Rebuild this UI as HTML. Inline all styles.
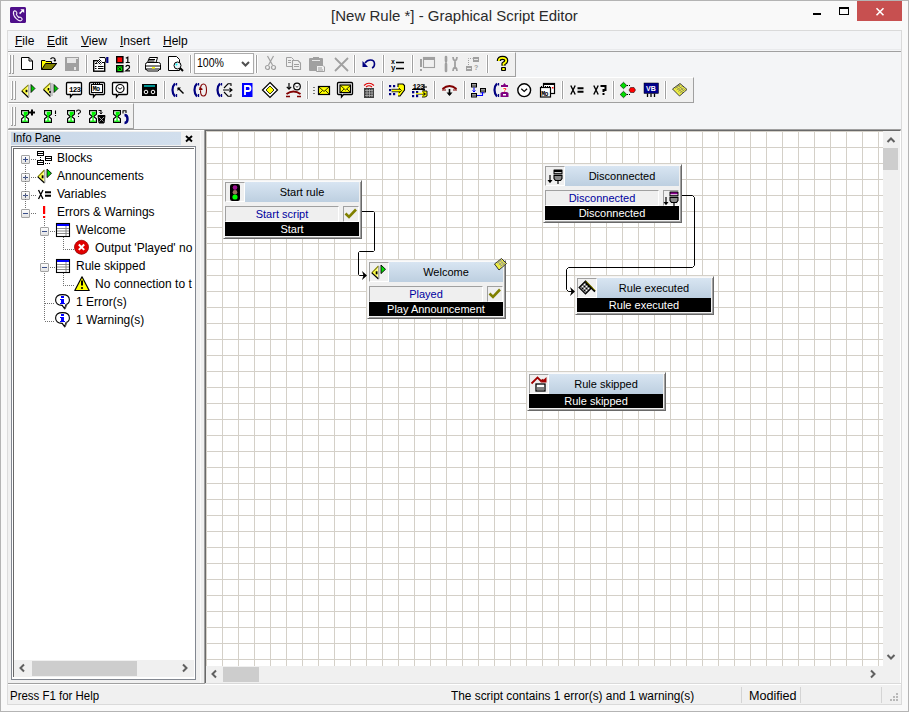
<!DOCTYPE html>
<html><head><meta charset="utf-8">
<style>
*{margin:0;padding:0;box-sizing:border-box}
html,body{width:909px;height:712px;overflow:hidden;background:#f9f9f9;font-family:"Liberation Sans",sans-serif;font-size:12px;color:#000}
.a{position:absolute}
#win{position:absolute;left:0;top:0;width:909px;height:712px;border:1px solid #b4b4b4;background:#f9f9f9}
svg{position:absolute;overflow:visible}
.sep{position:absolute;width:1px;background:#a0a0a0;border-right:1px solid #fff;width:2px}
.grip{position:absolute;width:4px;border-left:1px solid #a8a8a8;border-right:1px solid #a8a8a8}
.t{position:absolute;white-space:nowrap}
.node{position:absolute;background:#f0f0f0;border-left:1px solid #f8f8f8;border-top:1px solid #f8f8f8;box-shadow:inset -1px -1px 0 #a0a0a0, 1px 1px 0 #696969}
.hdr{position:absolute;background:linear-gradient(#d8e4f0,#bfd0e2);text-align:center;font-size:12px;line-height:19px}
.ibox{position:absolute;background:#f0f0f0;border-left:1px solid #a0a0a0;border-top:1px solid #a0a0a0;border-right:1px solid #fff;border-bottom:1px solid #fff}
.row{position:absolute;background:#efefef;border-left:1px solid #a0a0a0;border-top:1px solid #a0a0a0;border-right:1px solid #fff;border-bottom:1px solid #fff;text-align:center;color:#00008b;line-height:14px}
.blk{position:absolute;background:#000;color:#fff;text-align:center;line-height:14px}
.tree{position:absolute;white-space:nowrap;line-height:18px}
</style></head><body>
<div id="win"></div>
<!-- title bar -->
<div class="t" style="left:0;top:6px;width:909px;text-align:center;font-size:15px;color:#2b2b2b;line-height:20px">[New Rule *] - Graphical Script Editor</div>
<!-- app icon -->
<div class="a" style="left:10px;top:7px;width:16px;height:16px;background:#5b0f8f;border-radius:2px"></div>
<!-- min max close -->
<div class="a" style="left:813px;top:13px;width:8px;height:2px;background:#000"></div>
<div class="a" style="left:839px;top:7px;width:10px;height:8px;border:1px solid #000;border-top-width:2px"></div>
<div class="a" style="left:857px;top:1px;width:45px;height:20px;background:#c75050"></div>

<!-- menu bar -->
<div class="a" style="left:7px;top:30px;width:895px;height:21px;background:#f4f5f7;border-top:1px solid #dadada;border-left:1px solid #dadada;border-right:1px solid #dadada"></div>
<div class="a" style="left:7px;top:49px;width:895px;height:1px;background:#e9eaec"></div>
<div class="t" style="left:15px;top:34px;font-size:12px;line-height:14px"><u>F</u>ile</div>
<div class="t" style="left:47px;top:34px;font-size:12px;line-height:14px"><u>E</u>dit</div>
<div class="t" style="left:81px;top:34px;font-size:12px;line-height:14px"><u>V</u>iew</div>
<div class="t" style="left:120px;top:34px;font-size:12px;line-height:14px"><u>I</u>nsert</div>
<div class="t" style="left:163px;top:34px;font-size:12px;line-height:14px"><u>H</u>elp</div>

<!-- toolbar area bg -->
<div class="a" style="left:7px;top:51px;width:895px;height:79px;background:#f4f5f7;border-top:1px solid #a0a0a0;border-bottom:1px solid #a0a0a0"></div>
<!-- toolbar 1 -->
<div class="a" style="left:8px;top:52px;width:508px;height:25px;background:#f0f0f0;border-top:1px solid #fff;border-left:1px solid #fafafa;border-bottom:1px solid #a0a0a0;border-right:1px solid #a0a0a0"></div>
<!-- toolbar 2 -->
<div class="a" style="left:8px;top:77px;width:686px;height:26px;background:#f0f0f0;border-top:1px solid #fff;border-left:1px solid #fafafa;border-bottom:1px solid #a0a0a0;border-right:1px solid #a0a0a0"></div>
<!-- toolbar 3 -->
<div class="a" style="left:8px;top:103px;width:126px;height:26px;background:#f0f0f0;border-top:1px solid #fff;border-left:1px solid #fafafa;border-bottom:1px solid #a0a0a0;border-right:1px solid #a0a0a0"></div>


<div class="a" style="left:9px;top:55px;width:1px;height:19px;background:#fff"></div><div class="a" style="left:10px;top:55px;width:1px;height:19px;background:#a0a0a0"></div><div class="a" style="left:9px;top:73px;width:1px;height:1px;background:#a0a0a0"></div>
<div class="a" style="left:12px;top:55px;width:1px;height:19px;background:#fff"></div><div class="a" style="left:13px;top:55px;width:1px;height:19px;background:#a0a0a0"></div><div class="a" style="left:12px;top:73px;width:1px;height:1px;background:#a0a0a0"></div>
<div class="a" style="left:11px;top:81px;width:1px;height:19px;background:#fff"></div><div class="a" style="left:12px;top:81px;width:1px;height:19px;background:#a0a0a0"></div><div class="a" style="left:11px;top:99px;width:1px;height:1px;background:#a0a0a0"></div>
<div class="a" style="left:14px;top:81px;width:1px;height:19px;background:#fff"></div><div class="a" style="left:15px;top:81px;width:1px;height:19px;background:#a0a0a0"></div><div class="a" style="left:14px;top:99px;width:1px;height:1px;background:#a0a0a0"></div>
<div class="a" style="left:11px;top:107px;width:1px;height:19px;background:#fff"></div><div class="a" style="left:12px;top:107px;width:1px;height:19px;background:#a0a0a0"></div><div class="a" style="left:11px;top:125px;width:1px;height:1px;background:#a0a0a0"></div>
<div class="a" style="left:14px;top:107px;width:1px;height:19px;background:#fff"></div><div class="a" style="left:15px;top:107px;width:1px;height:19px;background:#a0a0a0"></div><div class="a" style="left:14px;top:125px;width:1px;height:1px;background:#a0a0a0"></div>
<!-- info pane -->
<div class="a" style="left:7px;top:130px;width:198px;height:553px;background:#f0f0f0;border-top:1px solid #fff"></div>
<div class="a" style="left:11px;top:132px;width:170px;height:13px;background:linear-gradient(90deg,#c9d7e7,#d2dfed)"></div>
<div class="t" style="left:13px;top:131px;font-size:12px;line-height:14px;color:#000;transform:scaleX(.93);transform-origin:0 0">Info Pane</div>
<svg class="a" style="left:185px;top:135px" width="8" height="8"><path d="M1 1 L7 6.5 M7 1 L1 6.5" stroke="#000" stroke-width="1.9"/></svg>
<div class="a" style="left:11px;top:146px;width:185px;height:534px;border:1px solid #828790;background:#fff"></div>
<div class="a" style="left:13px;top:148px;width:181px;height:529px;border-left:1px solid #696969;border-top:1px solid #696969;background:#fff"></div>
<!-- tree scrollbar -->
<div class="a" style="left:14px;top:660px;width:180px;height:17px;background:#f0f0f0"></div>
<div class="a" style="left:32px;top:661px;width:105px;height:15px;background:#cdcdcd"></div>
<div class="a" style="left:200px;top:130px;width:1px;height:553px;background:#fafafa"></div>
<div class="a" style="left:7px;top:683px;width:198px;height:1px;background:#a0a0a0"></div>

<!-- canvas -->
<div class="a" style="left:204px;top:129px;width:698px;height:555px;border-left:1px solid #a0a0a0;border-top:1px solid #a0a0a0;border-right:1px solid #dadada;background:#f0f0f0"></div>
<div class="a" style="left:205px;top:130px;width:696px;height:553px;border-left:1px solid #696969;border-top:1px solid #696969;border-right:1px solid #fff;background:#f0f0f0"></div>
<div class="a" style="left:206px;top:131px;width:677px;height:535px;background-color:#fff;background-image:linear-gradient(90deg,#d4d0c8 1px,transparent 1px),linear-gradient(#d4d0c8 1px,transparent 1px);background-size:16px 16px"></div>
<!-- v scrollbar thumb -->
<div class="a" style="left:883px;top:148px;width:15px;height:22px;background:#cdcdcd"></div>
<!-- h scrollbar thumb -->
<div class="a" style="left:223px;top:667px;width:36px;height:15px;background:#cdcdcd"></div>

<!-- status bar -->
<div class="a" style="left:7px;top:683px;width:895px;height:22px;background:#f0f0f0;border-top:1px solid #dadada;border-bottom:1px solid #dadada;border-left:1px solid #dadada;border-right:1px solid #dadada;box-shadow:inset 0 1px 0 #fff"></div>
<div class="a" style="left:7px;top:683px;width:198px;height:1px;background:#a0a0a0"></div>
<div class="t" style="left:10px;top:689px;font-size:12px;line-height:14px;transform:scaleX(.955);transform-origin:0 0">Press F1 for Help</div>
<div class="t" style="left:451px;top:689px;font-size:12px;line-height:14px;transform:scaleX(.988);transform-origin:0 0">The script contains 1 error(s) and 1 warning(s)</div>
<div class="a" style="left:741px;top:687px;width:1px;height:16px;background:#d4d4d4"></div>
<div class="t" style="left:749px;top:689px;font-size:12px;line-height:14px;transform:scaleX(1.05);transform-origin:0 0">Modified</div>
<div class="a" style="left:800px;top:687px;width:1px;height:16px;background:#d4d4d4"></div>
<div class="a" style="left:881px;top:687px;width:1px;height:16px;background:#d4d4d4"></div>

<!-- NODES -->
<div class="a" style="left:223px;top:180px;width:139px;height:59px;background:#f0f0f0;border-left:1px solid #f4f4f4;border-top:1px solid #f4f4f4;border-right:1px solid #696969;border-bottom:1px solid #696969;box-shadow:inset 1px 1px 0 #fafafa, inset -1px -1px 0 #a0a0a0"></div>
<div class="a" style="left:225px;top:182px;width:20px;height:20px;background:#f0f0f0;border-left:1px solid #a0a0a0;border-top:1px solid #a0a0a0;border-right:1px solid #fff;border-bottom:1px solid #fff"></div>
<div class="t" style="left:245px;top:182px;width:114px;height:20px;background:linear-gradient(#d8e5f2,#bdcfe0);text-align:center;line-height:20px;font-size:11px;color:#000">Start rule</div>
<div class="t" style="left:225px;top:206px;width:114px;height:16px;background:#efefef;border-left:1px solid #a0a0a0;border-top:1px solid #a0a0a0;border-right:1px solid #fff;border-bottom:1px solid #fff;text-align:center;line-height:14px;font-size:11px;color:#0000a0">Start script</div>
<div class="a" style="left:343px;top:206px;width:16px;height:16px;background:#efefef;border-left:1px solid #a0a0a0;border-top:1px solid #a0a0a0;border-right:1px solid #fff;border-bottom:1px solid #fff"></div>
<div class="t" style="left:225px;top:222px;width:134px;height:14px;background:#000;color:#fff;text-align:center;line-height:14px;font-size:11px">Start</div>
<div class="a" style="left:367px;top:260px;width:139px;height:59px;background:#f0f0f0;border-left:1px solid #f4f4f4;border-top:1px solid #f4f4f4;border-right:1px solid #696969;border-bottom:1px solid #696969;box-shadow:inset 1px 1px 0 #fafafa, inset -1px -1px 0 #a0a0a0"></div>
<div class="a" style="left:369px;top:262px;width:20px;height:20px;background:#f0f0f0;border-left:1px solid #a0a0a0;border-top:1px solid #a0a0a0;border-right:1px solid #fff;border-bottom:1px solid #fff"></div>
<div class="t" style="left:389px;top:262px;width:114px;height:20px;background:linear-gradient(#d8e5f2,#bdcfe0);text-align:center;line-height:20px;font-size:11px;color:#000">Welcome</div>
<div class="t" style="left:369px;top:286px;width:114px;height:16px;background:#efefef;border-left:1px solid #a0a0a0;border-top:1px solid #a0a0a0;border-right:1px solid #fff;border-bottom:1px solid #fff;text-align:center;line-height:14px;font-size:11px;color:#0000a0">Played</div>
<div class="a" style="left:487px;top:286px;width:16px;height:16px;background:#efefef;border-left:1px solid #a0a0a0;border-top:1px solid #a0a0a0;border-right:1px solid #fff;border-bottom:1px solid #fff"></div>
<div class="t" style="left:369px;top:302px;width:134px;height:14px;background:#000;color:#fff;text-align:center;line-height:14px;font-size:11px">Play Announcement</div>
<div class="a" style="left:543px;top:164px;width:139px;height:59px;background:#f0f0f0;border-left:1px solid #f4f4f4;border-top:1px solid #f4f4f4;border-right:1px solid #696969;border-bottom:1px solid #696969;box-shadow:inset 1px 1px 0 #fafafa, inset -1px -1px 0 #a0a0a0"></div>
<div class="a" style="left:545px;top:166px;width:20px;height:20px;background:#f0f0f0;border-left:1px solid #a0a0a0;border-top:1px solid #a0a0a0;border-right:1px solid #fff;border-bottom:1px solid #fff"></div>
<div class="t" style="left:565px;top:166px;width:114px;height:20px;background:linear-gradient(#d8e5f2,#bdcfe0);text-align:center;line-height:20px;font-size:11px;color:#000">Disconnected</div>
<div class="t" style="left:545px;top:190px;width:114px;height:16px;background:#efefef;border-left:1px solid #a0a0a0;border-top:1px solid #a0a0a0;border-right:1px solid #fff;border-bottom:1px solid #fff;text-align:center;line-height:14px;font-size:11px;color:#0000a0">Disconnected</div>
<div class="a" style="left:663px;top:190px;width:16px;height:16px;background:#efefef;border-left:1px solid #a0a0a0;border-top:1px solid #a0a0a0;border-right:1px solid #fff;border-bottom:1px solid #fff"></div>
<div class="t" style="left:545px;top:206px;width:134px;height:14px;background:#000;color:#fff;text-align:center;line-height:14px;font-size:11px">Disconnected</div>
<div class="a" style="left:575px;top:276px;width:139px;height:39px;background:#f0f0f0;border-left:1px solid #f4f4f4;border-top:1px solid #f4f4f4;border-right:1px solid #696969;border-bottom:1px solid #696969;box-shadow:inset 1px 1px 0 #fafafa, inset -1px -1px 0 #a0a0a0"></div>
<div class="a" style="left:577px;top:278px;width:20px;height:20px;background:#f0f0f0;border-left:1px solid #a0a0a0;border-top:1px solid #a0a0a0;border-right:1px solid #fff;border-bottom:1px solid #fff"></div>
<div class="t" style="left:597px;top:278px;width:114px;height:20px;background:linear-gradient(#d8e5f2,#bdcfe0);text-align:center;line-height:20px;font-size:11px;color:#000">Rule executed</div>
<div class="t" style="left:577px;top:298px;width:134px;height:14px;background:#000;color:#fff;text-align:center;line-height:14px;font-size:11px">Rule executed</div>
<div class="a" style="left:527px;top:372px;width:139px;height:39px;background:#f0f0f0;border-left:1px solid #f4f4f4;border-top:1px solid #f4f4f4;border-right:1px solid #696969;border-bottom:1px solid #696969;box-shadow:inset 1px 1px 0 #fafafa, inset -1px -1px 0 #a0a0a0"></div>
<div class="a" style="left:529px;top:374px;width:20px;height:20px;background:#f0f0f0;border-left:1px solid #a0a0a0;border-top:1px solid #a0a0a0;border-right:1px solid #fff;border-bottom:1px solid #fff"></div>
<div class="t" style="left:549px;top:374px;width:114px;height:20px;background:linear-gradient(#d8e5f2,#bdcfe0);text-align:center;line-height:20px;font-size:11px;color:#000">Rule skipped</div>
<div class="t" style="left:529px;top:394px;width:134px;height:14px;background:#000;color:#fff;text-align:center;line-height:14px;font-size:11px">Rule skipped</div>
<!-- /NODES -->
<div id="lline" class="a" style="left:7px;top:30px;width:1px;height:675px;background:#dcdcdc"></div><div class="a" style="left:901px;top:30px;width:1px;height:675px;background:#dadada"></div>
<!-- PARTS -->
<div class="a" style="left:85px;top:55px;width:3px;height:18px;border-left:1px solid #fff;border-right:1px solid #fff;background:#a0a0a0;opacity:1"></div>
<div class="a" style="left:137px;top:55px;width:3px;height:18px;border-left:1px solid #fff;border-right:1px solid #fff;background:#a0a0a0;opacity:1"></div>
<div class="a" style="left:189px;top:55px;width:3px;height:18px;border-left:1px solid #fff;border-right:1px solid #fff;background:#a0a0a0;opacity:1"></div>
<div class="a" style="left:255px;top:55px;width:3px;height:18px;border-left:1px solid #fff;border-right:1px solid #fff;background:#a0a0a0;opacity:1"></div>
<div class="a" style="left:353px;top:55px;width:3px;height:18px;border-left:1px solid #fff;border-right:1px solid #fff;background:#a0a0a0;opacity:1"></div>
<div class="a" style="left:382px;top:55px;width:3px;height:18px;border-left:1px solid #fff;border-right:1px solid #fff;background:#a0a0a0;opacity:1"></div>
<div class="a" style="left:411px;top:55px;width:3px;height:18px;border-left:1px solid #fff;border-right:1px solid #fff;background:#a0a0a0;opacity:1"></div>
<div class="a" style="left:486px;top:55px;width:3px;height:18px;border-left:1px solid #fff;border-right:1px solid #fff;background:#a0a0a0;opacity:1"></div>
<div class="a" style="left:133px;top:81px;width:3px;height:18px;border-left:1px solid #fff;border-right:1px solid #fff;background:#a0a0a0;opacity:1"></div>
<div class="a" style="left:163px;top:81px;width:3px;height:18px;border-left:1px solid #fff;border-right:1px solid #fff;background:#a0a0a0;opacity:1"></div>
<div class="a" style="left:306px;top:81px;width:3px;height:18px;border-left:1px solid #fff;border-right:1px solid #fff;background:#a0a0a0;opacity:1"></div>
<div class="a" style="left:381px;top:81px;width:3px;height:18px;border-left:1px solid #fff;border-right:1px solid #fff;background:#a0a0a0;opacity:1"></div>
<div class="a" style="left:433px;top:81px;width:3px;height:18px;border-left:1px solid #fff;border-right:1px solid #fff;background:#a0a0a0;opacity:1"></div>
<div class="a" style="left:463px;top:81px;width:3px;height:18px;border-left:1px solid #fff;border-right:1px solid #fff;background:#a0a0a0;opacity:1"></div>
<div class="a" style="left:561px;top:81px;width:3px;height:18px;border-left:1px solid #fff;border-right:1px solid #fff;background:#a0a0a0;opacity:1"></div>
<div class="a" style="left:612px;top:81px;width:3px;height:18px;border-left:1px solid #fff;border-right:1px solid #fff;background:#a0a0a0;opacity:1"></div>
<div class="a" style="left:664px;top:81px;width:3px;height:18px;border-left:1px solid #fff;border-right:1px solid #fff;background:#a0a0a0;opacity:1"></div>
<div class="a" style="left:194px;top:53px;width:60px;height:21px;border:1px solid #acacac;background:#fff"></div>
<div class="t" style="left:197px;top:56px;font-size:12px;line-height:14px;transform:scaleX(.88);transform-origin:0 0">100%</div>
<svg class="a" style="left:241px;top:60px" width="9" height="8"><path d="M1 2 L4.5 5.5 L8 2" stroke="#505050" stroke-width="2" fill="none"/></svg>
<svg class="a" style="left:0;top:0" width="909" height="712"><path d="M24 664.5 L20.5 668 L24 671.5 M183 664.5 L186.5 668 L183 671.5 M216 670.5 L212.5 674 L216 677.5 M871 670.5 L874.5 674 L871 677.5 M887.5 142 L891 138.5 L894.5 142 M887.5 655 L891 658.5 L894.5 655" stroke="#606060" stroke-width="2" fill="none"/></svg>
<svg class="a" style="left:890px;top:693px" width="10" height="10" fill="#b8b8b8"><rect x="6" y="0" width="2" height="2"/><rect x="3" y="3" width="2" height="2"/><rect x="6" y="3" width="2" height="2"/><rect x="0" y="6" width="2" height="2"/><rect x="3" y="6" width="2" height="2"/><rect x="6" y="6" width="2" height="2"/></svg>
<!-- /PARTS -->
<!-- TREE -->
<div class="a" style="left:0;top:0;width:909px;height:712px;clip-path:inset(149px 716px 51px 14px)"><div class="a" style="left:21px;top:155px;width:9px;height:9px;border:1px solid #a3a3a3;border-radius:1px;background:linear-gradient(#fcfcfc,#e3e3e3)"></div>
<div class="a" style="left:23px;top:159px;width:5px;height:1px;background:#3a4f8a"></div>
<div class="a" style="left:25px;top:157px;width:1px;height:5px;background:#3a4f8a"></div>
<div class="a" style="left:31px;top:159px;width:6px;height:1px;background:repeating-linear-gradient(90deg,#707070 0 1px,transparent 1px 2px)"></div>
<div class="a" style="left:21px;top:173px;width:9px;height:9px;border:1px solid #a3a3a3;border-radius:1px;background:linear-gradient(#fcfcfc,#e3e3e3)"></div>
<div class="a" style="left:23px;top:177px;width:5px;height:1px;background:#3a4f8a"></div>
<div class="a" style="left:25px;top:175px;width:1px;height:5px;background:#3a4f8a"></div>
<div class="a" style="left:31px;top:177px;width:6px;height:1px;background:repeating-linear-gradient(90deg,#707070 0 1px,transparent 1px 2px)"></div>
<div class="a" style="left:21px;top:191px;width:9px;height:9px;border:1px solid #a3a3a3;border-radius:1px;background:linear-gradient(#fcfcfc,#e3e3e3)"></div>
<div class="a" style="left:23px;top:195px;width:5px;height:1px;background:#3a4f8a"></div>
<div class="a" style="left:25px;top:193px;width:1px;height:5px;background:#3a4f8a"></div>
<div class="a" style="left:31px;top:195px;width:6px;height:1px;background:repeating-linear-gradient(90deg,#707070 0 1px,transparent 1px 2px)"></div>
<div class="a" style="left:21px;top:209px;width:9px;height:9px;border:1px solid #a3a3a3;border-radius:1px;background:linear-gradient(#fcfcfc,#e3e3e3)"></div>
<div class="a" style="left:23px;top:213px;width:5px;height:1px;background:#3a4f8a"></div>
<div class="a" style="left:31px;top:213px;width:6px;height:1px;background:repeating-linear-gradient(90deg,#707070 0 1px,transparent 1px 2px)"></div>
<div class="a" style="left:25px;top:165px;width:1px;height:44px;background:repeating-linear-gradient(#707070 0 1px,transparent 1px 2px)"></div>
<div class="t" style="left:57px;top:149px;line-height:18px;font-size:12px">Blocks</div>
<div class="t" style="left:57px;top:167px;line-height:18px;font-size:12px">Announcements</div>
<div class="t" style="left:57px;top:185px;line-height:18px;font-size:12px">Variables</div>
<div class="t" style="left:57px;top:203px;line-height:18px;font-size:12px">Errors &amp; Warnings</div>
<div class="a" style="left:44px;top:219px;width:1px;height:102px;background:repeating-linear-gradient(#707070 0 1px,transparent 1px 2px)"></div>
<div class="a" style="left:40px;top:227px;width:9px;height:9px;border:1px solid #a3a3a3;border-radius:1px;background:linear-gradient(#fcfcfc,#e3e3e3)"></div>
<div class="a" style="left:42px;top:231px;width:5px;height:1px;background:#3a4f8a"></div>
<div class="a" style="left:50px;top:231px;width:6px;height:1px;background:repeating-linear-gradient(90deg,#707070 0 1px,transparent 1px 2px)"></div>
<div class="a" style="left:40px;top:263px;width:9px;height:9px;border:1px solid #a3a3a3;border-radius:1px;background:linear-gradient(#fcfcfc,#e3e3e3)"></div>
<div class="a" style="left:42px;top:267px;width:5px;height:1px;background:#3a4f8a"></div>
<div class="a" style="left:50px;top:267px;width:6px;height:1px;background:repeating-linear-gradient(90deg,#707070 0 1px,transparent 1px 2px)"></div>
<div class="a" style="left:63px;top:237px;width:1px;height:12px;background:repeating-linear-gradient(#707070 0 1px,transparent 1px 2px)"></div>
<div class="a" style="left:63px;top:249px;width:11px;height:1px;background:repeating-linear-gradient(90deg,#707070 0 1px,transparent 1px 2px)"></div>
<div class="a" style="left:63px;top:273px;width:1px;height:12px;background:repeating-linear-gradient(#707070 0 1px,transparent 1px 2px)"></div>
<div class="a" style="left:63px;top:285px;width:11px;height:1px;background:repeating-linear-gradient(90deg,#707070 0 1px,transparent 1px 2px)"></div>
<div class="a" style="left:45px;top:303px;width:10px;height:1px;background:repeating-linear-gradient(90deg,#707070 0 1px,transparent 1px 2px)"></div>
<div class="a" style="left:45px;top:321px;width:10px;height:1px;background:repeating-linear-gradient(90deg,#707070 0 1px,transparent 1px 2px)"></div>
<div class="t" style="left:76px;top:221px;line-height:18px;font-size:12px">Welcome</div>
<div class="t" style="left:95px;top:239px;line-height:18px;font-size:12px">Output 'Played' no</div>
<div class="t" style="left:76px;top:257px;line-height:18px;font-size:12px">Rule skipped</div>
<div class="t" style="left:95px;top:275px;line-height:18px;font-size:12px">No connection to t</div>
<div class="t" style="left:76px;top:293px;line-height:18px;font-size:12px">1 Error(s)</div>
<div class="t" style="left:76px;top:311px;line-height:18px;font-size:12px">1 Warning(s)</div></div>
<!-- /TREE -->
<!-- CONN -->
<svg class="a" style="left:0;top:0" width="909" height="712"><path d="M362 211.5 H373.5 L374.5 212.5 V250.5 L373.5 251.5 H359.5 L358.5 252.5 V274.5 L359.5 275.5 H364 M682 195.5 H692.5 L694.5 197.5 V265.5 L692.5 267.5 H568.5 L566.5 269.5 V289.5 L568.5 291.5 H572" stroke="#000" stroke-width="1" fill="none"/><path d="M367 275.5 L362 271 L363.5 275.5 L362 280 Z M575 291.5 L570 287 L571.5 291.5 L570 296 Z" fill="#000"/></svg>
<!-- /CONN -->
<!-- ICONS1 -->
<svg class="a" style="left:0;top:0" width="909" height="712"><g transform="translate(21,57)"><path d="M0.5 0.5 H8 L11.5 4 V12.5 H0.5 Z" fill="#fff" stroke="#000"/><path d="M8 0.5 V4 H11.5" fill="none" stroke="#000"/></g><g transform="translate(41,57)"><path d="M0.5 3.5 H4 L5 4.5 H10.5 V6.5 H15.5 L10.5 12.5 H0.5 Z" fill="#ffff00" stroke="#000"/><path d="M0.8 12.5 L4.5 6.5 H15.5 L10.5 12.5 Z" fill="#808000" stroke="#000"/><path d="M9.5 2 Q12 -0.5 14 2 V4" fill="none" stroke="#000" stroke-width="1.2"/><path d="M12.3 3 L15.2 3 L14 5 Z" fill="#000"/></g><g transform="translate(65,57)"><rect x="0" y="0" width="14" height="14" fill="#a0a0a0"/><rect x="2" y="1" width="9" height="5" fill="#e6e6e6"/><rect x="9" y="10" width="2" height="3" fill="#e6e6e6"/><rect x="11" y="1" width="2" height="1" fill="#e6e6e6"/></g><g transform="translate(93,57)"><rect x="0.7" y="3.7" width="11" height="10.5" fill="#fff" stroke="#000" stroke-width="1.4"/><path d="M2 9.5 H3.5 M5 9.5 H10.5 M2 11.5 H3.5 M5 11.5 H10.5" stroke="#000" stroke-width="1.1"/><path d="M2 6 L3 7 L6.5 3" fill="none" stroke="#000" stroke-width="1"/><defs><pattern id="hp" width="2" height="2" patternUnits="userSpaceOnUse"><rect width="2" height="2" fill="#fff"/><rect width="1" height="1" fill="#000"/><rect x="1" y="1" width="1" height="1" fill="#000"/></pattern></defs><path d="M3 5.5 L7 1 L10.5 4.5 L7 8 Z" fill="url(#hp)"/><path d="M6.5 0.5 H12 Q13.5 3 12 5.5 H9" fill="#fff" stroke="#000" stroke-width="1"/><rect x="13.2" y="0" width="2.2" height="6" fill="#000080"/></g><g transform="translate(116,56)"><rect x="0.7" y="0.7" width="6.2" height="6" fill="#f00" stroke="#000" stroke-width="1.4"/><rect x="0.7" y="9.7" width="6.2" height="6" fill="#00f000" stroke="#000" stroke-width="1.4"/><path d="M2.3 11.3 L5.3 14.3 M5.3 11.3 L2.3 14.3" stroke="#000" stroke-width=".9"/><path d="M9.8 2.3 L11.8 1.2 V6.5 M9.8 6.5 H13.8" fill="none" stroke="#000" stroke-width="1.2"/><path d="M9.8 10.8 Q10 9.4 11.8 9.4 Q13.6 9.4 13.6 10.9 Q13.6 12 11.5 13.4 L9.8 14.8 H14" fill="none" stroke="#000" stroke-width="1.2"/></g><g transform="translate(145,57)"><path d="M4.5 0.5 H12.5 L11 5.5 H2.5 Z" fill="#fff" stroke="#000"/><path d="M4 2.5 H10 M3.5 4 H9.5" stroke="#000"/><path d="M0.5 7.5 Q0.5 5.5 2.5 5.5 H13.5 Q15.5 5.5 15.5 7.5 V12.5 H0.5 Z" fill="#fff" stroke="#000"/><path d="M1 9 H15 M1 12 H15" stroke="#000"/><rect x="7" y="10" width="3" height="1.5" fill="#ff0"/><path d="M1.5 12.5 L2.5 14 H13 L14.5 12.5" fill="#fff" stroke="#000"/></g><g transform="translate(168,56)"><path d="M0.5 0.5 H8.5 L11.5 3.5 V14.5 H0.5 Z" fill="#fff" stroke="#000"/><circle cx="9.5" cy="9.5" r="3.5" fill="#e8f4f8" stroke="#000"/><path d="M8 8 L9 9" stroke="#0ff" stroke-width="2"/><path d="M12 12 L15 15" stroke="#000" stroke-width="2"/></g><g transform="translate(265,56)"><path d="M2.5 0 L7.5 9 M8.5 0 L3.5 9" stroke="#a0a0a0" stroke-width="1.2" fill="none"/><circle cx="2.5" cy="11.5" r="2" fill="none" stroke="#a0a0a0" stroke-width="1.2"/><circle cx="8.5" cy="11.5" r="2" fill="none" stroke="#a0a0a0" stroke-width="1.2"/></g><g transform="translate(286,57)"><path d="M0.5 0.5 H5.5 L7.5 2.5 V9.5 H0.5 Z" fill="#f0f0f0" stroke="#a0a0a0"/><path d="M2 3.5 H5 M2 5.5 H5" stroke="#a0a0a0"/><path d="M6.5 3.5 H12 L14.5 6 V12.5 H6.5 Z" fill="#f0f0f0" stroke="#a0a0a0" stroke-width="1.1"/><path d="M8 7.5 H13 M8 9.5 H13" stroke="#a0a0a0"/></g><g transform="translate(309,57)"><rect x="0" y="1" width="14" height="13" rx="1" fill="#a0a0a0"/><rect x="4" y="0" width="6" height="2" fill="#a0a0a0"/><rect x="3" y="3" width="8" height="1" fill="#e6e6e6"/><path d="M7.5 8.5 H14 L15.5 10 V14.5 H7.5 Z" fill="#f0f0f0" stroke="#a0a0a0"/><path d="M9 11 H13 M9 13 H14" stroke="#a0a0a0"/></g><g transform="translate(334,57)"><path d="M1 1 L14 14 M14 1 L1 14" stroke="#a0a0a0" stroke-width="1.8"/></g><g transform="translate(362,59)"><path d="M3 4 Q5 1 8.5 1 Q12.5 1 12.5 5 Q12.5 8 10 9" fill="none" stroke="#000080" stroke-width="1.6"/><path d="M0.5 2 V8 H6 Z" fill="#000080"/></g><g transform="translate(391,58)"><text x="0" y="5.5" font-size="6.5" font-family="Liberation Mono" font-weight="bold">x</text><text x="0" y="12" font-size="7.5" font-family="Liberation Mono" font-weight="bold">y</text><path d="M5 4.5 H13 M5 10.5 H13" stroke="#000" stroke-width="1.6"/></g><g transform="translate(420,57)"><rect x="0" y="2" width="2" height="8" fill="#a0a0a0"/><rect x="0" y="12" width="2" height="2" fill="#a0a0a0"/><rect x="3.5" y="0.5" width="11" height="10" fill="none" stroke="#a0a0a0" stroke-width="1.1"/><rect x="3" y="0" width="12" height="3" fill="#a0a0a0"/></g><g transform="translate(444,56)"><path d="M2 1 V5 M2 8 V15" stroke="#a0a0a0" stroke-width="2.6" stroke-linecap="round"/><path d="M2 5 V8" stroke="#a0a0a0" stroke-width="1.4"/><path d="M9 1 Q9 4 11 5 Q13 4 13 1 M11 5 V11 M9 15 Q9 12 11 11 Q13 12 13 15" fill="none" stroke="#a0a0a0" stroke-width="1.8"/></g><g transform="translate(466,57)"><rect x="7" y="0" width="6" height="5" fill="#a0a0a0"/><rect x="8" y="2" width="4" height="1" fill="#e6e6e6"/><rect x="0" y="9" width="6" height="5" fill="#a0a0a0"/><rect x="1" y="11" width="4" height="1" fill="#e6e6e6"/><path d="M2.5 8 V1.5 H6.5" fill="none" stroke="#a0a0a0" stroke-dasharray="1 1"/><text x="8" y="13" font-size="7" fill="#a0a0a0" font-family="Liberation Sans" font-weight="bold">?</text></g><g transform="translate(496,56)"><path d="M2.8 5 Q2.8 1.8 6.5 1.8 Q10.2 1.8 10.2 4.6 Q10.2 6.6 7.5 7.6 V9.8" fill="none" stroke="#000" stroke-width="4.2" stroke-linejoin="round"/><rect x="5" y="11" width="5" height="4" rx="1" fill="#000"/><path d="M2.8 5 Q2.8 1.8 6.5 1.8 Q10.2 1.8 10.2 4.6 Q10.2 6.6 7.5 7.6 V9.8" fill="none" stroke="#ffff00" stroke-width="1.8"/><rect x="6.3" y="12" width="2.4" height="2" fill="#ffff00"/></g></svg>
<!-- /ICONS1 -->
<!-- ICONS2 -->
<svg class="a" style="left:0;top:0" width="909" height="712"><g transform="translate(21,84)"><path d="M7.5 0.8 L0.8 7 L7.5 13.5 Z" fill="#ffffa0"/><path d="M7.5 0.8 L0.8 7" stroke="#808000" stroke-width="1.1"/><path d="M0.8 7 L7.5 13.5" stroke="#000" stroke-width="1.2"/><path d="M7.8 1 V13" stroke="#a0a0a0" stroke-width="1.1"/><path d="M1.5 7 L6 3 V11 Z" fill="#ffff00" opacity=".6"/><path d="M5.5 5.8 V8.2" stroke="#000" stroke-width="1.8"/><path d="M10 0.5 L14 4.5 L10 8.5 Z" fill="#0c0" stroke="#000" stroke-width=".8"/></g><g transform="translate(43,82)"><path d="M7.5 1 L0.5 7.5 L7.5 14.5 Z" fill="#ffffa0"/><path d="M7.5 1 L0.5 7.5" stroke="#808000" stroke-width="1.1"/><path d="M0.5 7.5 L7.5 14.5" stroke="#000" stroke-width="1.2"/><path d="M1.3 7.5 L6 3.5 V11.5 Z" fill="#ffff00" opacity=".6"/><path d="M7.5 1 V14.5" stroke="#a0a0a0" stroke-width="1.2"/><path d="M5.5 6 V8.5 M7 9 V11" stroke="#000" stroke-width="1.6"/><path d="M9 1 V14" stroke="#a0a0a0"/><path d="M11 2.5 L15 6.5 L11 10.5 Z" fill="#0c0" stroke="#000" stroke-width=".8"/></g><g transform="translate(66,82)"><path d="M1.5 0.5 H14.5 Q15.5 0.5 15.5 1.5 V11.5 Q15.5 12.5 14.5 12.5 H6.5 L4.5 15 V12.5 H1.5 Q0.5 12.5 0.5 11.5 V1.5 Q0.5 0.5 1.5 0.5 Z" fill="#fff" stroke="#000" stroke-width="1.3"/><text x="3" y="9.6" font-size="7.5" font-family="Liberation Mono" font-weight="bold" letter-spacing="-0.8">123</text></g><g transform="translate(89,82)"><path d="M1.5 0.5 H14.5 Q15.5 0.5 15.5 1.5 V11.5 Q15.5 12.5 14.5 12.5 H6.5 L4.5 15 V12.5 H1.5 Q0.5 12.5 0.5 11.5 V1.5 Q0.5 0.5 1.5 0.5 Z" fill="#fff" stroke="#000" stroke-width="1.3"/><rect x="2.5" y="2.5" width="11" height="8" fill="none" stroke="#000"/><text x="3.5" y="9.3" font-size="6.8" font-family="Liberation Mono" font-weight="bold" letter-spacing="-0.5">Mo</text><path d="M4 1.5 H12" stroke="#000" stroke-dasharray="1 1"/></g><g transform="translate(112,82)"><path d="M1.5 0.5 H14.5 Q15.5 0.5 15.5 1.5 V11.5 Q15.5 12.5 14.5 12.5 H6.5 L4.5 15 V12.5 H1.5 Q0.5 12.5 0.5 11.5 V1.5 Q0.5 0.5 1.5 0.5 Z" fill="#fff" stroke="#000" stroke-width="1.3"/><circle cx="8" cy="6.5" r="4" fill="#fff" stroke="#000" stroke-width="1.2"/><path d="M5.8 5.5 L8 7.2 L10.2 5.5" fill="none" stroke="#000"/></g><g transform="translate(142,84)"><rect x="0" y="0" width="15" height="12" fill="#000"/><path d="M2 2 H13" stroke="#00d0d0" stroke-width="1.4"/><circle cx="4" cy="8" r="1.8" fill="none" stroke="#fff"/><circle cx="11" cy="8" r="1.8" fill="none" stroke="#fff"/></g><g transform="translate(172,83)"><path d="M3 0.5 Q0.5 3 0.5 7 Q0.5 11 3 13.5" fill="none" stroke="#000080" stroke-width="2.2"/><path d="M4.5 0 V2.5 M4.5 11 V14" stroke="#000080" stroke-width="1.3"/><path d="M6 5 L11.5 10.5" stroke="#000" stroke-width="1.4"/><path d="M5.5 4.5 H9 L5.5 8 Z" fill="#000"/></g><g transform="translate(194,83)"><path d="M3 0.5 Q0.5 3 0.5 7 Q0.5 11 3 13.5" fill="none" stroke="#000080" stroke-width="2.2"/><path d="M4.5 0 V2.5 M4.5 11 V14" stroke="#000080" stroke-width="1.3"/><path d="M6.5 6.5 Q6.5 1 9.5 1 Q12.5 1 12.5 7 Q12.5 13 9.5 13 Q6.5 13 6.5 8" fill="none" stroke="#800000" stroke-width="1.1"/><path d="M5 6.5 H8.5" stroke="#800000" stroke-width="1.1"/><path d="M5.5 4.5 L6.5 7.5 L8 5" fill="none" stroke="#800000"/></g><g transform="translate(217,83)"><path d="M3 0.5 Q0.5 3 0.5 7 Q0.5 11 3 13.5" fill="none" stroke="#000080" stroke-width="2.2"/><path d="M4.5 0 V2.5 M4.5 11 V14" stroke="#000080" stroke-width="1.3"/><path d="M7 5 L11 0.8 H14 V3 M7 9 L11 13.2 H14 V11 M6 7 H15 M12.5 5 L15 7 L12.5 9" fill="none" stroke="#000" stroke-width="1.1"/></g><g transform="translate(242,83)"><rect x="0" y="0" width="10.5" height="14" fill="#0000ff"/><path d="M3 12 V3 H6.5 Q8.5 3 8.5 5.5 Q8.5 8 6.5 8 H3" fill="none" stroke="#fff" stroke-width="1.8"/></g><g transform="translate(262,82)"><path d="M8 0.5 L15.5 8 L8 15.5 L0.5 8 Z" fill="#fff" stroke="#000" stroke-width="1.2"/><path d="M8 4 L12 8 L8 12 L4 8 Z" fill="#ffff00" stroke="#000" stroke-width=".8"/></g><g transform="translate(286,83)"><path d="M3 0 V6 M0.8 3.8 L3 6.2 L5.2 3.8" fill="none" stroke="#000" stroke-width="1.2"/><circle cx="11" cy="3.5" r="3.3" fill="#fff" stroke="#000" stroke-width="1.2"/><path d="M9.5 3 L11 4.3 L12.5 3" fill="none" stroke="#000" stroke-width=".8"/><path d="M0.5 11 Q7.5 6 14.5 11" fill="none" stroke="#800000" stroke-width="2"/><path d="M0 13.5 H4 M11 13.5 H15" stroke="#800000" stroke-width="1.4"/></g><g transform="translate(313,86)"><path d="M0.5 1.5 H2 M0.5 4.5 H2 M0.5 7.5 H2" stroke="#000" stroke-dasharray="1 1"/><g transform="translate(5,0)"><rect x="0.5" y="0.5" width="11" height="8" fill="#ffff00" stroke="#000" stroke-width="1.2"/><path d="M1 1 L6 5.5 L11 1 M1 8 L4.5 4.5 M11 8 L7.5 4.5" fill="none" stroke="#000" stroke-width=".8"/></g></g><g transform="translate(337,82)"><path d="M1.5 0.5 H14.5 Q15.5 0.5 15.5 1.5 V11.5 Q15.5 12.5 14.5 12.5 H6.5 L4.5 15 V12.5 H1.5 Q0.5 12.5 0.5 11.5 V1.5 Q0.5 0.5 1.5 0.5 Z" fill="#fff" stroke="#000" stroke-width="1.3"/><g transform="translate(2.5,2.5)"><rect x="0.5" y="0.5" width="10.5" height="7.5" fill="#ffff00" stroke="#000" stroke-width="1.2"/><path d="M1 1 L6 5.5 L11 1 M1 8 L4.5 4.5 M11 8 L7.5 4.5" fill="none" stroke="#000" stroke-width=".8"/></g></g><g transform="translate(363,82)"><path d="M1 3.5 Q6 -1 11 3.5 M3 5 Q6 2.5 9 5" fill="none" stroke="#e00000" stroke-width="1.1"/><rect x="1" y="6" width="10" height="10" fill="#404040"/><path d="M2 8.5 H10 M2 11 H10 M2 13.5 H10 M4 7 V15 M6.5 7 V15 M9 7 V15" stroke="#bbb" stroke-width=".7"/></g><g transform="translate(389,83)"><g fill="#000080"><rect x="0" y="2" width="2.2" height="2.2"/><rect x="4" y="2" width="2.2" height="2.2"/><rect x="0" y="6" width="2.2" height="2.2"/><rect x="0" y="10" width="2.2" height="2.2"/><rect x="4" y="10" width="2.2" height="2.2"/></g><path d="M9 4 V1 H14 L15.5 2.5 V7 L11 13 H9" fill="#ffff00" stroke="#000" stroke-width="1.1"/><path d="M3 7.5 H12" stroke="#ffff00" stroke-width="2.2"/><path d="M2.5 6.3 H11 M2.5 8.8 H11 M10 5 L12.5 7.5 L10 10" fill="none" stroke="#000" stroke-width=".8"/></g><g transform="translate(412,82)"><text x="0.5" y="7" font-size="7.5" font-family="Liberation Mono" font-weight="bold" letter-spacing="-0.8">123</text><path d="M0 7.5 H13 M12 2 V12 M12 5 H15" stroke="#000" stroke-width="1"/><g transform="translate(0,4)"><g fill="#000080"><rect x="0" y="5" width="2.2" height="2.2"/><rect x="4" y="5" width="2.2" height="2.2"/><rect x="0" y="5" width="2.2" height="2.2"/><rect x="0" y="9" width="2.2" height="2.2"/><rect x="4" y="9" width="2.2" height="2.2"/></g></g><path d="M10 9 H15 V14 L13 15 H10" fill="#ffff00" stroke="#000" stroke-width=".9"/><path d="M4 12 H13 M11.5 10.5 L13.5 12 L11.5 13.5" fill="none" stroke="#000" stroke-width="1"/><path d="M4 11.4 H11" stroke="#ffff00" stroke-width="1"/></g><g transform="translate(442,84)"><path d="M0.5 5 Q7.5 -1 14.5 5" fill="none" stroke="#800000" stroke-width="2"/><path d="M0 6 H4 M11 6 H15" stroke="#800000" stroke-width="1.2"/><path d="M7.5 5 V11" stroke="#000" stroke-width="1.6"/><path d="M4.5 8.5 L7.5 12 L10.5 8.5 Z" fill="#000"/></g><g transform="translate(471,83)"><g><rect x="0.5" y="0.5" width="5" height="3.5" fill="#c0c0c0" stroke="#000"/><path d="M1 2.2 H5" stroke="#000" stroke-width=".6"/></g><g transform="translate(0,10)"><rect x="0.5" y="0.5" width="5" height="3.5" fill="#c0c0c0" stroke="#000"/><path d="M1 2.2 H5" stroke="#000" stroke-width=".6"/></g><g transform="translate(9,5)"><rect x="0.5" y="0.5" width="5" height="3.5" fill="#c0c0c0" stroke="#000"/><path d="M1 2.2 H5" stroke="#000" stroke-width=".6"/></g><path d="M3 4.5 V9" stroke="#00f" stroke-width="1.1"/><path d="M1.5 7.5 L3 9 L4.5 7.5" fill="none" stroke="#00f"/><path d="M6 12.5 H11.5 V9.5" fill="none" stroke="#00f" stroke-width="1.1"/><path d="M10 10.5 L11.5 9 L13 10.5" fill="none" stroke="#00f"/></g><g transform="translate(494,83)"><path d="M3 0.5 Q0.5 3 0.5 7 Q0.5 11 3 13.5" fill="none" stroke="#000080" stroke-width="2.2"/><path d="M4.5 0 V2.5 M4.5 11 V14" stroke="#000080" stroke-width="1.3"/><path d="M9 2 L10.5 0 L12 2 Z" fill="#800080"/><rect x="7" y="2" width="7" height="2" fill="#800080"/><rect x="8.5" y="4" width="4" height="4" fill="#fff"/><text x="9" y="9" font-size="6" fill="#f00" font-weight="bold" font-family="Liberation Sans">?</text><path d="M6.5 14 V10.5 Q6.5 9 8.5 9 H12.5 Q14.5 9 14.5 10.5 V14 Z" fill="#800080"/><rect x="9" y="11" width="3" height="1.5" fill="#fff"/></g><g transform="translate(517,83)"><circle cx="7.2" cy="7.2" r="6.4" fill="#fff" stroke="#000" stroke-width="1.4"/><path d="M4.3 5.8 L7.2 8.4 L10.1 5.8" fill="none" stroke="#000" stroke-width="1.2"/></g><g transform="translate(540,83)"><rect x="3.5" y="0.5" width="11" height="10" fill="#fff" stroke="#000" stroke-width="1.2"/><rect x="3" y="0" width="12" height="2" fill="#000"/><rect x="12" y="4" width="1.5" height="1.5" fill="#f00"/><rect x="0.5" y="4.5" width="10" height="9.5" fill="#fff" stroke="#000" stroke-width="1.2"/><path d="M1 3.5 H10" stroke="#000" stroke-dasharray="1 1"/><text x="1.2" y="12.5" font-size="6.5" font-family="Liberation Mono" font-weight="bold" letter-spacing="-0.6">Mo</text></g><g transform="translate(570,85)"><path d="M0.8 0.5 L2 3 L4 7 L5.2 9.5 M5.2 0.5 L4 3 L2 7 L0.8 9.5" fill="none" stroke="#000" stroke-width="1.4"/><path d="M7.5 3.2 H13.5 M7.5 6.8 H13.5" stroke="#000" stroke-width="1.9"/></g><g transform="translate(593,85)"><path d="M0.8 0.5 L2 3 L4 7 L5.2 9.5 M5.2 0.5 L4 3 L2 7 L0.8 9.5" fill="none" stroke="#000" stroke-width="1.4"/><path d="M7.5 1 H12.5 V5 H10.5 V7" fill="none" stroke="#000" stroke-width="2"/><rect x="9.5" y="8" width="2" height="2" fill="#000"/></g><g transform="translate(620,82)"><g><path d="M3.5 0.3 L6.8 3.5 L3.5 6.7 L0.2 3.5 Z" fill="#0d0" stroke="#000" stroke-width=".6"/></g><g transform="translate(0,9)"><path d="M3.5 0.3 L6.8 3.5 L3.5 6.7 L0.2 3.5 Z" fill="#0d0" stroke="#000" stroke-width=".6"/></g><path d="M7 3.5 H11 M7 12.5 H11" stroke="#000" stroke-dasharray="1 1"/><path d="M9 8 L10.5 5.5 H14 L15.5 8 L14 10.5 H10.5 Z" fill="#f00" stroke="#000" stroke-width=".5"/></g><g transform="translate(644,83)"><rect x="0" y="0" width="14.5" height="10.5" fill="#00008b" stroke="#000" stroke-width=".5"/><text x="2" y="8" font-size="7" fill="#fff" font-weight="bold" font-family="Liberation Sans">VB</text><path d="M3.5 10.5 V14 M7 10.5 V14 M10.5 10.5 V14" stroke="#000" stroke-width="1.3"/></g><g transform="translate(672,83)"><path d="M0.5 6 L8 0.5 L15 6.5 L7.5 13 Z" fill="#f0f040" stroke="#404040" stroke-width="1"/><path d="M3 5.5 L9 1.5 M4.5 7 L11 3 M6 8.5 L12.5 4.5 M7.5 10 L13.5 6 M4 3.5 L11 10 M6 2 L13 9" stroke="#888860" stroke-width=".8" fill="none"/></g><g transform="translate(21,110)"><path d="M0.6 0.6 H7.4 V4.3 L4.6 6.5 L7.4 8.7 V12.4 H0.6 V8.7 L3.4 6.5 L0.6 4.3 Z" fill="#fff" stroke="#000" stroke-width="1.2"/><path d="M2.6 1.8 H6.7 V4 L4.5 5.8 H3.5 L2.6 5 Z" fill="#00f000"/><rect x="3.4" y="5" width="1.3" height="6" fill="#00f000"/><rect x="1.3" y="10.6" width="5.4" height="1.2" fill="#00f000"/><path d="M11 -0.5 V5.5 M8 2.5 H14" stroke="#000" stroke-width="2"/></g><g transform="translate(44,110)"><path d="M0.6 0.6 H7.4 V4.3 L4.6 6.5 L7.4 8.7 V12.4 H0.6 V8.7 L3.4 6.5 L0.6 4.3 Z" fill="#fff" stroke="#000" stroke-width="1.2"/><path d="M2.6 1.8 H6.7 V4 L4.5 5.8 H3.5 L2.6 5 Z" fill="#00f000"/><rect x="3.4" y="5" width="1.3" height="6" fill="#00f000"/><rect x="1.3" y="10.6" width="5.4" height="1.2" fill="#00f000"/><path d="M11.5 0.5 V4 M11.5 5 V6" stroke="#000" stroke-width="1.1"/></g><g transform="translate(67,110)"><path d="M0.6 0.6 H7.4 V4.3 L4.6 6.5 L7.4 8.7 V12.4 H0.6 V8.7 L3.4 6.5 L0.6 4.3 Z" fill="#fff" stroke="#000" stroke-width="1.2"/><path d="M2.6 1.8 H6.7 V4 L4.5 5.8 H3.5 L2.6 5 Z" fill="#00f000"/><rect x="3.4" y="5" width="1.3" height="6" fill="#00f000"/><rect x="1.3" y="10.6" width="5.4" height="1.2" fill="#00f000"/><path d="M9.5 1.5 Q9.5 0 11.5 0 Q13.5 0 13.5 1.8 Q13.5 3 11.5 3.5 V4.5 M11.5 6 V7" fill="none" stroke="#000" stroke-width="1.1"/></g><g transform="translate(89,110)"><path d="M0.6 0.6 H7.4 V4.3 L4.6 6.5 L7.4 8.7 V12.4 H0.6 V8.7 L3.4 6.5 L0.6 4.3 Z" fill="#fff" stroke="#000" stroke-width="1.2"/><path d="M2.6 1.8 H6.7 V4 L4.5 5.8 H3.5 L2.6 5 Z" fill="#00f000"/><rect x="3.4" y="5" width="1.3" height="6" fill="#00f000"/><rect x="1.3" y="10.6" width="5.4" height="1.2" fill="#00f000"/><path d="M9.5 0.5 H12 V3" fill="none" stroke="#000" stroke-width="1.1"/><path d="M10.5 2.5 L12 4 L13.5 2.5" fill="none" stroke="#000" stroke-width=".9"/><path d="M9 5.5 H16 L15 13 H10 Z" fill="#000" stroke="#000" stroke-width="1"/><path d="M10 7 L14.5 11.5 M15 7 L10.5 11.5" stroke="#c0c0c0" stroke-width=".8"/></g><g transform="translate(113,110)"><path d="M0.6 0.6 H7.4 V4.3 L4.6 6.5 L7.4 8.7 V12.4 H0.6 V8.7 L3.4 6.5 L0.6 4.3 Z" fill="#fff" stroke="#000" stroke-width="1.2"/><path d="M2.6 1.8 H6.7 V4 L4.5 5.8 H3.5 L2.6 5 Z" fill="#00f000"/><rect x="3.4" y="5" width="1.3" height="6" fill="#00f000"/><rect x="1.3" y="10.6" width="5.4" height="1.2" fill="#00f000"/><path d="M10 3.5 V0.8 H13 V3" fill="none" stroke="#000" stroke-width="1.1"/><path d="M11.5 5 Q14.5 5 14.5 9 Q14.5 13 11.5 13" fill="none" stroke="#000080" stroke-width="2.4"/></g></svg>
<!-- /ICONS2 -->
<!-- ICONS3 -->
<svg class="a" style="left:0;top:0" width="909" height="712"><g transform="translate(10,7)"><rect x="0" y="0" width="16" height="16" rx="2" fill="#4f0f8a"/><path d="M3.5 4.8 Q4.5 3.3 5.8 4.2 L6.8 5.5 Q7.3 6.5 6.3 7.2 Q6.8 8.8 8.8 10.5 Q9.8 9.7 10.8 10.4 L12 11.6 Q12.6 12.6 11.2 13.6 Q9.2 14.6 6 11.4 Q2.8 8.2 3.5 4.8 Z" fill="none" stroke="#f4eefa" stroke-width="1.1"/><path d="M9.6 6.6 L13 3.2" stroke="#fff" stroke-width="1.5"/><path d="M10.3 2.2 H14.2 V6.1 Z" fill="#fff"/></g><g transform="translate(876,8)"><path d="M0.5 0.3 L7.5 7.2 M7.5 0.3 L0.5 7.2" stroke="#fff" stroke-width="1.6"/></g><g transform="translate(343,206)"><path d="M2.5 7.5 L6 11 L13 3.5" fill="none" stroke="#808000" stroke-width="2.6"/></g><g transform="translate(487,286)"><path d="M2.5 7.5 L6 11 L13 3.5" fill="none" stroke="#808000" stroke-width="2.6"/></g><g transform="translate(230,184)"><rect x="0" y="0" width="10" height="17" rx="2.2" fill="#000"/><circle cx="5" cy="3.6" r="2.3" fill="#9a1090"/><circle cx="5" cy="8.2" r="2.3" fill="#9a7060"/><circle cx="5" cy="13" r="2.6" fill="#00ff00"/></g><g transform="translate(371,265)"><path d="M7.5 1 L0.8 7.8 L7.5 14 Z" fill="#ffffa0"/><path d="M7.5 1 L0.8 7.8" stroke="#808000" stroke-width="1.1"/><path d="M0.8 7.8 L7.5 14" stroke="#000" stroke-width="1.2"/><path d="M1.6 7.8 L6 4 V11.5 Z" fill="#ffff00" opacity=".6"/><path d="M7.8 1.2 V13.8" stroke="#909090" stroke-width="1.1"/><path d="M5.6 6.3 V9.3" stroke="#000" stroke-width="1.8"/><path d="M10 0 L14.5 4.3 L10 8.6 Z" fill="#00e000" stroke="#000" stroke-width=".9"/></g><g transform="translate(494,258)"><path d="M0.5 6 L7.5 0.5 L12.5 5.5 L5 12 Z" fill="#f0f040" stroke="#303030" stroke-width="1"/><path d="M3 5.5 L8 1.8 M4.5 7 L9.7 3.5 M6 8.5 L11 5 M3.5 3.5 L9 9 M5.5 2 L11 7.5" stroke="#8888a0" stroke-width=".8" fill="none"/></g><g transform="translate(548,169)"><path d="M2 6 V13" stroke="#000" stroke-width="1.2"/><path d="M-0.5 11 L2 14.2 L4.5 11 Z" fill="#000"/><rect x="5.5" y="0.5" width="9" height="5" fill="#000" rx=".5"/><rect x="6.5" y="3" width="7" height="1.2" fill="#d0d0d0"/><path d="M6 6.5 H14 V9.5 L12.5 11.5 H7.5 L6 9.5 Z" fill="#8a8a8a" stroke="#000" stroke-width="1.1"/><path d="M10 11.5 V15" stroke="#000" stroke-width="1.2"/></g><g transform="translate(664,191)"><path d="M2 6 V13" stroke="#000" stroke-width="1.2"/><path d="M-0.5 11 L2 14.2 L4.5 11 Z" fill="#000"/><rect x="5.5" y="0.5" width="9" height="5" fill="#000" rx=".5"/><rect x="6.5" y="3" width="7" height="1.2" fill="#fff"/><path d="M6 6.5 H14 V9.5 L12.5 11.5 H7.5 L6 9.5 Z" fill="#8a8a8a" stroke="#000" stroke-width="1.1"/><path d="M10 11.5 V15" stroke="#000" stroke-width="1.2"/><rect x="6.5" y="1.5" width="7" height="1.8" fill="#8a0090"/></g><g transform="translate(579,281)"><defs><pattern id="chk" width="4" height="4" patternUnits="userSpaceOnUse" x="0.5" y="0.5"><rect width="4" height="4" fill="#fff"/><rect width="2" height="2" fill="#000"/><rect x="2" y="2" width="2" height="2" fill="#000"/></pattern></defs><path d="M6.5 0 L13 6.5 L6.5 13 L0 6.5 Z" fill="url(#chk)" stroke="#000" stroke-width="1.1"/><path d="M6.5 1 L16 10.5" stroke="#000" stroke-width="1.8"/><path d="M7 0.3 L16 9.3" stroke="#a8a800" stroke-width="1"/></g><g transform="translate(531,376)"><path d="M0.5 7.5 L6.5 1.5 L10 5 L12.5 3.5" fill="none" stroke="#a00000" stroke-width="1.8"/><path d="M9.5 6.5 H15.5 V1 Z" fill="#a00000"/><rect x="5" y="8" width="9" height="7" fill="#fff" stroke="#000" stroke-width="1.3"/><rect x="6" y="11" width="7" height="3" fill="#808080"/></g><g transform="translate(37,151)"><g shape-rendering="crispEdges"><g><rect x="0" y="0" width="7" height="5" fill="#000"/><rect x="1" y="1" width="5" height="1" fill="#fff"/><rect x="1" y="3" width="5" height="1" fill="#fff"/></g><g transform="translate(0,9)"><rect x="0" y="0" width="7" height="5" fill="#000"/><rect x="1" y="1" width="5" height="1" fill="#fff"/><rect x="1" y="3" width="5" height="1" fill="#fff"/></g><g transform="translate(8,5)"><rect x="0" y="0" width="7" height="5" fill="#000"/><rect x="1" y="1" width="5" height="1" fill="#fff"/><rect x="1" y="3" width="5" height="1" fill="#fff"/></g><rect x="3" y="6" width="1" height="1" fill="#000"/><rect x="3" y="8" width="1" height="1" fill="#000"/><rect x="8" y="12" width="1" height="1" fill="#000"/><rect x="10" y="12" width="1" height="1" fill="#000"/><rect x="12" y="12" width="1" height="1" fill="#000"/></g></g><g transform="translate(37,169)"><path d="M7.5 1 L0.8 7.8 L7.5 14 Z" fill="#ffffa0"/><path d="M7.5 1 L0.8 7.8" stroke="#808000" stroke-width="1.1"/><path d="M0.8 7.8 L7.5 14" stroke="#000" stroke-width="1.2"/><path d="M1.6 7.8 L6 4 V11.5 Z" fill="#ffff00" opacity=".6"/><path d="M7.8 1.2 V13.8" stroke="#909090" stroke-width="1.1"/><path d="M5.6 6.3 V9.3" stroke="#000" stroke-width="1.8"/><path d="M10 0 L14.5 4.3 L10 8.6 Z" fill="#00e000" stroke="#000" stroke-width=".9"/></g><g transform="translate(38,190)"><path d="M0.5 0 L5 9 M5 0 L0.5 9" stroke="#000" stroke-width="1.3"/><path d="M7 2.2 H13 M7 5.8 H13" stroke="#000" stroke-width="1.9"/></g><g transform="translate(43,206)"><rect x="0" y="0" width="2.2" height="8" fill="#f00"/><rect x="0" y="10" width="2.2" height="2" fill="#f00"/></g><g transform="translate(56,223)"><rect x="0.5" y="0.5" width="13" height="13" fill="#fff" stroke="#000" stroke-width="1.1"/><rect x="1" y="1" width="12" height="2" fill="#0000ff"/><path d="M1 5.5 H13 M1 8 H13 M1 10.5 H13 M10 3 V13" stroke="#808080" stroke-width=".9"/></g><g transform="translate(56,259)"><rect x="0.5" y="0.5" width="13" height="13" fill="#fff" stroke="#000" stroke-width="1.1"/><rect x="1" y="1" width="12" height="2" fill="#0000ff"/><path d="M1 5.5 H13 M1 8 H13 M1 10.5 H13 M10 3 V13" stroke="#808080" stroke-width=".9"/></g><g transform="translate(74,240)"><circle cx="7.5" cy="7.5" r="7.2" fill="#404040" opacity=".6"/><circle cx="7.5" cy="7.2" r="7" fill="#e00000" stroke="#900" stroke-width=".6"/><path d="M4.8 4.5 L10.2 9.9 M10.2 4.5 L4.8 9.9" stroke="#fff" stroke-width="2"/></g><g transform="translate(74,276)"><path d="M8 0.8 L15.2 14.5 H0.8 Z" fill="#ffff00" stroke="#000" stroke-width="1.2" stroke-linejoin="round"/><path d="M8 4.5 V9.5" stroke="#000" stroke-width="2"/><circle cx="8" cy="12" r="1.1" fill="#000"/></g><g transform="translate(55,294)"><path d="M7.5 0.6 Q14.4 0.6 14.4 6 Q14.4 9.4 11 10.6 L9.5 14.6 L7.2 11.4 Q0.6 11 0.6 6 Q0.6 0.6 7.5 0.6 Z" fill="#fff" stroke="#000" stroke-width="1.1"/><path d="M12 10 L10 15" stroke="#505050" stroke-width="1.2"/><g shape-rendering="crispEdges" fill="#0000ff"><rect x="6" y="2" width="3" height="2"/><rect x="5" y="5" width="4" height="1"/><rect x="6" y="5" width="3" height="4"/><rect x="5" y="9" width="5" height="1"/></g></g><g transform="translate(55,312)"><path d="M7.5 0.6 Q14.4 0.6 14.4 6 Q14.4 9.4 11 10.6 L9.5 14.6 L7.2 11.4 Q0.6 11 0.6 6 Q0.6 0.6 7.5 0.6 Z" fill="#fff" stroke="#000" stroke-width="1.1"/><path d="M12 10 L10 15" stroke="#505050" stroke-width="1.2"/><g shape-rendering="crispEdges" fill="#0000ff"><rect x="6" y="2" width="3" height="2"/><rect x="5" y="5" width="4" height="1"/><rect x="6" y="5" width="3" height="4"/><rect x="5" y="9" width="5" height="1"/></g></g></svg>
<!-- /ICONS3 -->
</body></html>
